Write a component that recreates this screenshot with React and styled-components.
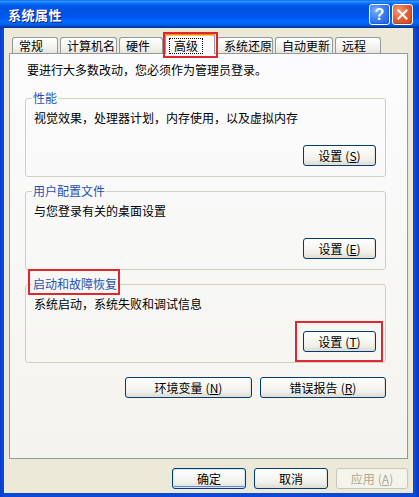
import React from 'react';
import styled, { createGlobalStyle } from 'styled-components';

const GlobalStyle = createGlobalStyle`
  body {
    margin: 0;
    background: #ffffff;
    font-family: "Noto Sans CJK SC", "Liberation Sans", sans-serif;
  }
`;

const UI_FONT = `"Noto Sans CJK SC", "Liberation Sans", sans-serif`;

const Window = styled.div`
  width: 419px;
  height: 497px;
  display: flex;
  flex-direction: column;
  background: linear-gradient(90deg, #0a3fcd 0%, #0b4ad8 1%, #0b4ad8 99%, #0836c4 100%);
  overflow: hidden;
`;

const TitleBar = styled.div`
  height: 28px;
  flex: none;
  display: flex;
  align-items: center;
  justify-content: space-between;
  padding: 0 6px 0 8px;
  background: linear-gradient(
    180deg,
    #0058ee 0%,
    #3593ff 4%,
    #288eff 7%,
    #127dff 10%,
    #036ffc 13%,
    #0262ee 17%,
    #0057e5 23%,
    #0054e3 28%,
    #0055eb 56%,
    #005bf5 66%,
    #026afe 76%,
    #0062ef 86%,
    #0052d6 92%,
    #0040ab 96%,
    #003092 100%
  );
`;

const Title = styled.span`
  color: #ffffff;
  font: bold 13px/1 ${UI_FONT};
  letter-spacing: 0.5px;
  text-shadow: 1px 1px 0 #0f1a89;
`;

const TitleButtons = styled.div`
  display: flex;
  gap: 2px;
  margin-top: 1px;
`;

const CaptionButton = styled.div`
  width: 21px;
  height: 21px;
  box-sizing: border-box;
  border: 1px solid #ffffff;
  border-radius: 3px;
  display: flex;
  align-items: center;
  justify-content: center;
  color: #ffffff;
  font: bold 16px/1 "Liberation Sans", sans-serif;
  background: ${(p) =>
    p.$close
      ? 'radial-gradient(circle at 30% 30%, #f29b77 0%, #e2613a 45%, #cc4512 100%)'
      : 'radial-gradient(circle at 30% 30%, #7fb0ff 0%, #3a7ef5 45%, #1c5be3 100%)'};
  box-shadow: inset -1px -1px 0 rgba(0, 0, 0, 0.15);
`;

const Body = styled.div`
  flex: 1;
  display: flex;
  flex-direction: column;
  margin: 0 6px 4px 4px;
  background: #ece9d8;
  padding: 0 5px 4px 5px;
`;

const TabStrip = styled.div`
  display: flex;
  align-items: flex-end;
  gap: 2px;
  padding: 5px 0 0 3px;
  height: 20px;
`;

const Tab = styled.div`
  position: relative;
  box-sizing: border-box;
  width: ${(p) => p.$w}px;
  height: ${(p) => (p.$active ? 21 : 16)}px;
  margin-bottom: ${(p) => (p.$active ? -1 : 0)}px;
  z-index: ${(p) => (p.$active ? 2 : 0)};
  padding: ${(p) => (p.$active ? '3px 0 0 3px' : '0 0 0 6px')};
  border: 1px solid #919b9c;
  border-bottom: none;
  border-radius: 3px 3px 0 0;
  font: 12px/15px ${UI_FONT};
  color: #000000;
  white-space: nowrap;
  background: ${(p) =>
    p.$active ? '#fcfcfe' : 'linear-gradient(180deg, #ffffff 0%, #f4f3ee 60%, #e7e5dc 100%)'};
  ${(p) =>
    p.$active &&
    `
    border-top: 2px solid #e68b2c;
    box-shadow: inset 0 1px 0 #ffc73c;
  `}
`;

const TabMark = styled.span`
  position: absolute;
  top: -3px;
  left: -3px;
  right: -4px;
  bottom: -4px;
  border: 2px solid #e0262e;
  pointer-events: none;
`;

const FocusLabel = styled.span`
  display: inline-block;
  padding: 0 4px;
  border: 1px dotted #000000;
  line-height: 14px;
`;

const Panel = styled.div`
  position: relative;
  z-index: 1;
  flex: 1;
  display: flex;
  flex-direction: column;
  border: 1px solid #919b9c;
  background: linear-gradient(180deg, #fcfcfe 0%, #f4f3ee 100%);
  padding: 9px 21px 0 15px;
`;

const Intro = styled.div`
  font: 12px/14px ${UI_FONT};
  color: #000000;
  padding-left: 2px;
  margin-bottom: 14px;
`;

const GroupBox = styled.fieldset`
  margin: 0 0 7px 0;
  padding: 0 9px 10px 8px;
  border: 1px solid #d0d0bf;
  border-radius: 3px;
  min-width: 0;
  display: flex;
  flex-direction: column;
`;

const GroupLegend = styled.legend`
  position: relative;
  margin-left: -2px;
  padding: 0 1px;
  font: 12px/14px ${UI_FONT};
  color: #1d52b0;
`;

const LegendMark = styled.span`
  position: absolute;
  top: -8px;
  left: -4px;
  right: -2px;
  bottom: -4px;
  border: 2px solid #e0262e;
  pointer-events: none;
`;

const GroupText = styled.div`
  font: 12px/14px ${UI_FONT};
  color: #000000;
  margin-top: 6px;
  margin-bottom: 20px;
`;

const GroupActions = styled.div`
  display: flex;
  justify-content: flex-end;
`;

const ButtonWrap = styled.span`
  position: relative;
  display: inline-flex;
`;

const ButtonMark = styled.span`
  position: absolute;
  top: -10px;
  left: -8px;
  right: -7px;
  bottom: -10px;
  border: 2px solid #e0262e;
  pointer-events: none;
`;

const Button = styled.button`
  box-sizing: border-box;
  width: ${(p) => p.$w}px;
  height: 21px;
  padding: 0;
  font: 12px/1 ${UI_FONT};
  color: ${(p) => (p.disabled ? '#aca899' : '#000000')};
  border: 1px solid ${(p) => (p.disabled ? '#c9c7ba' : '#003c74')};
  border-radius: 3px;
  background: ${(p) =>
    p.disabled
      ? '#f5f4ea'
      : 'linear-gradient(180deg, #ffffff 0%, #f7f7f4 40%, #efeee9 75%, #dcd8cc 100%)'};
  box-shadow: ${(p) =>
    p.$default
      ? 'inset 0 0 0 1px #cee7ff, inset 0 -1px 0 1px #6982ee'
      : p.disabled
      ? 'none'
      : 'inset -1px -1px 0 #e3e0d5'};
  cursor: default;
`;

const Mnemonic = styled.span`
  margin-left: 3px;

  u {
    text-decoration: underline;
  }
`;

const ActionRow = styled.div`
  display: flex;
  justify-content: flex-end;
  gap: 8px;
  margin-top: 7px;
`;

const Footer = styled.div`
  display: flex;
  justify-content: flex-end;
  gap: 8px;
  margin-top: 9px;
`;

const tabs = [
  { label: '常规', w: 46 },
  { label: '计算机名', w: 57 },
  { label: '硬件', w: 44 },
  { label: '高级', w: 50, active: true },
  { label: '系统还原', w: 56 },
  { label: '自动更新', w: 58 },
  { label: '远程', w: 46 },
];

const groups = [
  { title: '性能', text: '视觉效果，处理器计划，内存使用，以及虚拟内存', key: 'S' },
  { title: '用户配置文件', text: '与您登录有关的桌面设置', key: 'E' },
  { title: '启动和故障恢复', text: '系统启动，系统失败和调试信息', key: 'T', marked: true },
];

function CloseGlyph() {
  return (
    <svg width="11" height="11" viewBox="0 0 11 11">
      <path d="M1.5 1.5 L9.5 9.5 M9.5 1.5 L1.5 9.5" stroke="#ffffff" strokeWidth="2" strokeLinecap="square" />
    </svg>
  );
}

function Hotkey({ k }) {
  return (
    <Mnemonic>
      (<u>{k}</u>)
    </Mnemonic>
  );
}

function Group({ title, text, hotkey, marked }) {
  const button = (
    <Button $w={73}>
      设置<Hotkey k={hotkey} />
    </Button>
  );
  return (
    <GroupBox>
      <GroupLegend>
        {title}
        {marked && <LegendMark />}
      </GroupLegend>
      <GroupText>{text}</GroupText>
      <GroupActions>
        {marked ? (
          <ButtonWrap>
            {button}
            <ButtonMark />
          </ButtonWrap>
        ) : (
          button
        )}
      </GroupActions>
    </GroupBox>
  );
}

export default function App() {
  return (
    <>
      <GlobalStyle />
      <Window>
        <TitleBar>
          <Title>系统属性</Title>
          <TitleButtons>
            <CaptionButton>?</CaptionButton>
            <CaptionButton $close>
              <CloseGlyph />
            </CaptionButton>
          </TitleButtons>
        </TitleBar>
        <Body>
          <TabStrip>
            {tabs.map((t) => (
              <Tab key={t.label} $w={t.w} $active={t.active}>
                {t.active ? <FocusLabel>{t.label}</FocusLabel> : t.label}
                {t.active && <TabMark />}
              </Tab>
            ))}
          </TabStrip>
          <Panel>
            <Intro>要进行大多数改动，您必须作为管理员登录。</Intro>
            {groups.map((g) => (
              <Group key={g.key} title={g.title} text={g.text} hotkey={g.key} marked={g.marked} />
            ))}
            <ActionRow>
              <Button $w={127}>
                环境变量<Hotkey k="N" />
              </Button>
              <Button $w={126}>
                错误报告<Hotkey k="R" />
              </Button>
            </ActionRow>
          </Panel>
          <Footer>
            <Button $w={74} $default>
              确定
            </Button>
            <Button $w={74}>取消</Button>
            <Button $w={72} disabled>
              应用<Hotkey k="A" />
            </Button>
          </Footer>
        </Body>
      </Window>
    </>
  );
}
